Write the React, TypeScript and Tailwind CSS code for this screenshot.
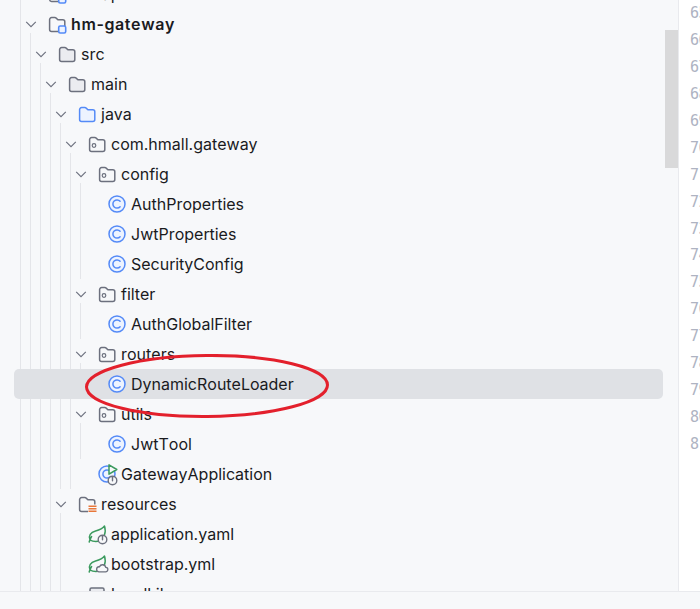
type Kind = "module" | "folder" | "source" | "package" | "resources" | "class" | "app" | "yamlBoot" | "yamlCloud" | "file";

type Node = {
  name: string;
  kind: Kind;
  bold?: boolean;
  selected?: boolean;
  children?: Node[];
};

const tree: Node[] = [
  { name: "hm-api", kind: "module" },
  {
    name: "hm-gateway",
    kind: "module",
    bold: true,
    children: [
      {
        name: "src",
        kind: "folder",
        children: [
          {
            name: "main",
            kind: "folder",
            children: [
              {
                name: "java",
                kind: "source",
                children: [
                  {
                    name: "com.hmall.gateway",
                    kind: "package",
                    children: [
                      {
                        name: "config",
                        kind: "package",
                        children: [
                          { name: "AuthProperties", kind: "class" },
                          { name: "JwtProperties", kind: "class" },
                          { name: "SecurityConfig", kind: "class" },
                        ],
                      },
                      {
                        name: "filter",
                        kind: "package",
                        children: [{ name: "AuthGlobalFilter", kind: "class" }],
                      },
                      {
                        name: "routers",
                        kind: "package",
                        children: [{ name: "DynamicRouteLoader", kind: "class", selected: true }],
                      },
                      {
                        name: "utils",
                        kind: "package",
                        children: [{ name: "JwtTool", kind: "class" }],
                      },
                      { name: "GatewayApplication", kind: "app" },
                    ],
                  },
                ],
              },
              {
                name: "resources",
                kind: "resources",
                children: [
                  { name: "application.yaml", kind: "yamlBoot" },
                  { name: "bootstrap.yml", kind: "yamlCloud" },
                  { name: "hmall.ib", kind: "file" },
                ],
              },
            ],
          },
        ],
      },
    ],
  },
];

const lineNumbers = [65, 66, 67, 68, 69, 70, 71, 72, 73, 74, 75, 76, 77, 78, 79, 80, 81];

const folderPath = "M1.6 4.6a2 2 0 0 1 2-2h3.3c.5 0 .9.2 1.3.5l1.7 1.6h4.9a2 2 0 0 1 2 2v7.7a2 2 0 0 1-2 2H3.6a2 2 0 0 1-2-2z";

const Leaf = () => (
  <path
    d="M2 14.800C.2 10.800 2.600 7.300 7.500 6c3.600-1 6.800-2 9-5 1 3.200 1 6.500-.2 9.500M2 14.800c2.200 1.500 5 1.900 8 1.500M3.600 11.500C2.600 13 1.800 14.800 1.200 17"
    fill="none"
    stroke="#3b9a5e"
    strokeWidth="1.500"
    strokeLinecap="round"
    strokeLinejoin="round"
  />
);

const PowerBadge = () => (
  <g>
    <circle cx="14" cy="14" r="4.300" fill="#f7f8fa" stroke="#6c707e" strokeWidth="1.400" />
    <path d="M14 10.800v3.400" stroke="#6c707e" strokeWidth="1.400" strokeLinecap="round" />
  </g>
);

const TreeIcon = ({ kind }: { kind: Kind }) => {
  if (kind === "class") {
    return (
      <svg width="18" height="18" viewBox="0 0 18 18" fill="none">
        <circle cx="9" cy="9" r="8" fill="#edf3ff" stroke="#548af7" strokeWidth="1.500" />
        <path d="M12.100 6.300a4.100 4.100 0 1 0 0 5.400" stroke="#548af7" strokeWidth="1.500" strokeLinecap="round" />
      </svg>
    );
  }
  if (kind === "app") {
    return (
      <svg width="20" height="20" viewBox="0 0 20 20" fill="none" className="overflow-visible">
        <circle cx="9" cy="10" r="8" fill="#edf3ff" stroke="#548af7" strokeWidth="1.500" />
        <path d="M12.100 7.300a4.100 4.100 0 1 0 0 5.400" stroke="#548af7" strokeWidth="1.500" strokeLinecap="round" />
        <path d="M11 .8v9.400l7.800-4.700z" fill="#f7f8fa" stroke="#3b9a5e" strokeWidth="1.500" strokeLinejoin="round" />
        <g transform="translate(.5 2.500)">
          <PowerBadge />
        </g>
      </svg>
    );
  }
  if (kind === "yamlBoot" || kind === "yamlCloud") {
    return (
      <svg width="20" height="18" viewBox="0 0 20 18" fill="none" className="overflow-visible">
        <Leaf />
        {kind === "yamlBoot" ? (
          <g transform="translate(.5 .5)">
            <PowerBadge />
          </g>
        ) : (
          <path d="M10.800 16.800h6.700a2.200 2.200 0 0 0 .3-4.400 3.300 3.300 0 0 0-6.300-.6 2.500 2.500 0 0 0-.7 5z" fill="#f7f8fa" stroke="#6c707e" strokeWidth="1.300" />
        )}
      </svg>
    );
  }
  if (kind === "file") {
    return (
      <svg width="18" height="18" viewBox="0 0 18 18" fill="none">
        <rect x="2" y="3" width="14" height="13" rx="1.500" fill="#ebecf0" stroke="#6c707e" strokeWidth="1.500" />
      </svg>
    );
  }
  const fill = kind === "folder" ? "#ebecf0" : kind === "source" ? "#edf3ff" : "#f7f8fa";
  const stroke = kind === "source" ? "#548af7" : "#6c707e";
  return (
    <svg width="18" height="18" viewBox="0 0 18 18" fill="none" className="overflow-visible">
      <path d={folderPath} fill={fill} stroke={stroke} strokeWidth="1.500" strokeLinejoin="round" />
      {kind === "package" && <circle cx="6" cy="10.500" r="1.800" stroke="#6c707e" strokeWidth="1.200" />}
      {kind === "module" && <rect x="10.700" y="11" width="7" height="7" rx="1.500" fill="#edf3ff" stroke="#548af7" strokeWidth="1.600" />}
      {kind === "resources" && (
        <g>
          <rect x="10" y="9.500" width="9" height="8.500" fill="#f7f8fa" />
          <path d="M10.500 11.200h8M10.500 13.700h8M10.500 16.200h8" stroke="#e8773a" strokeWidth="1.400" />
        </g>
      )}
    </svg>
  );
};

const Chevron = () => (
  <svg width="12" height="12" viewBox="0 0 12 12" fill="none" className="shrink-0">
    <path d="M1.200 3.800 6 8.600l4.800-4.800" stroke="#6c707e" strokeWidth="1.100" />
  </svg>
);

const TreeRow = ({ node }: { node: Node }) => {
  const hasKids = !!node.children;
  return (
    <div
      className={
        "flex h-[30px] items-center whitespace-nowrap " +
        (node.selected ? "relative -ml-[67px] mr-[15px] rounded-[5px] bg-[#dfe1e5] pl-[67px]" : "")
      }
    >
      <div className="ml-[4px] flex w-[12px] shrink-0 justify-center">{hasKids && <Chevron />}</div>
      <div className="ml-[11px] flex h-[18px] w-[18px] shrink-0 items-center justify-start">
        <TreeIcon kind={node.kind} />
      </div>
      <span
        className={
          "ml-[5px] text-[16px] text-[#1a1b1e] [font-kerning:none] " +
          (node.bold ? "font-semibold tracking-[0.6px]" : "font-normal")
        }
      >
        {node.name}
      </span>
    </div>
  );
};

const TreeNode = ({ node }: { node: Node }) => (
  <div>
    <TreeRow node={node} />
    {node.children && (
      <div className="-mt-[6px] ml-[9px] border-l border-[#e4e5e9] pt-[6px]">
        {node.children.map((child) => (
          <TreeNode key={child.name} node={child} />
        ))}
      </div>
    )}
  </div>
);

export default function App() {
  return (
    <div className="relative flex h-[609px] w-[700px] flex-col overflow-hidden bg-[#f7f8fa] font-['Inter',sans-serif]">
      <div className="flex min-h-0 flex-1">
        <div className="relative w-[678px] overflow-hidden">
          <div className="-mt-[21px] ml-[20px] border-l border-[#e4e5e9]">
            {tree.map((node) => (
              <TreeNode key={node.name} node={node} />
            ))}
          </div>
          <div className="absolute right-0 top-[30px] h-[138px] w-[13px] bg-[#d9d9da]" />
        </div>
        <div className="flex-1 overflow-hidden border-l border-[#e9eaee] bg-white pl-[11px] font-['DejaVu_Sans_Mono',monospace] text-[15px] leading-[26.94px] tracking-[-0.6px] text-[#aeb3c2]">
          {lineNumbers.map((n) => (
            <div key={n}>{n}</div>
          ))}
        </div>
      </div>
      <div className="h-[18px] shrink-0 border-t border-[#e9eaee] bg-[#f7f8fa]" />
      <svg className="pointer-events-none absolute left-[84px] top-[354px]" width="246" height="65" viewBox="0 0 246 65" fill="none">
        <ellipse cx="123" cy="32" rx="120.500" ry="30.500" stroke="#e3202c" strokeWidth="3" transform="rotate(-0.500 123 32)" />
      </svg>
    </div>
  );
}
